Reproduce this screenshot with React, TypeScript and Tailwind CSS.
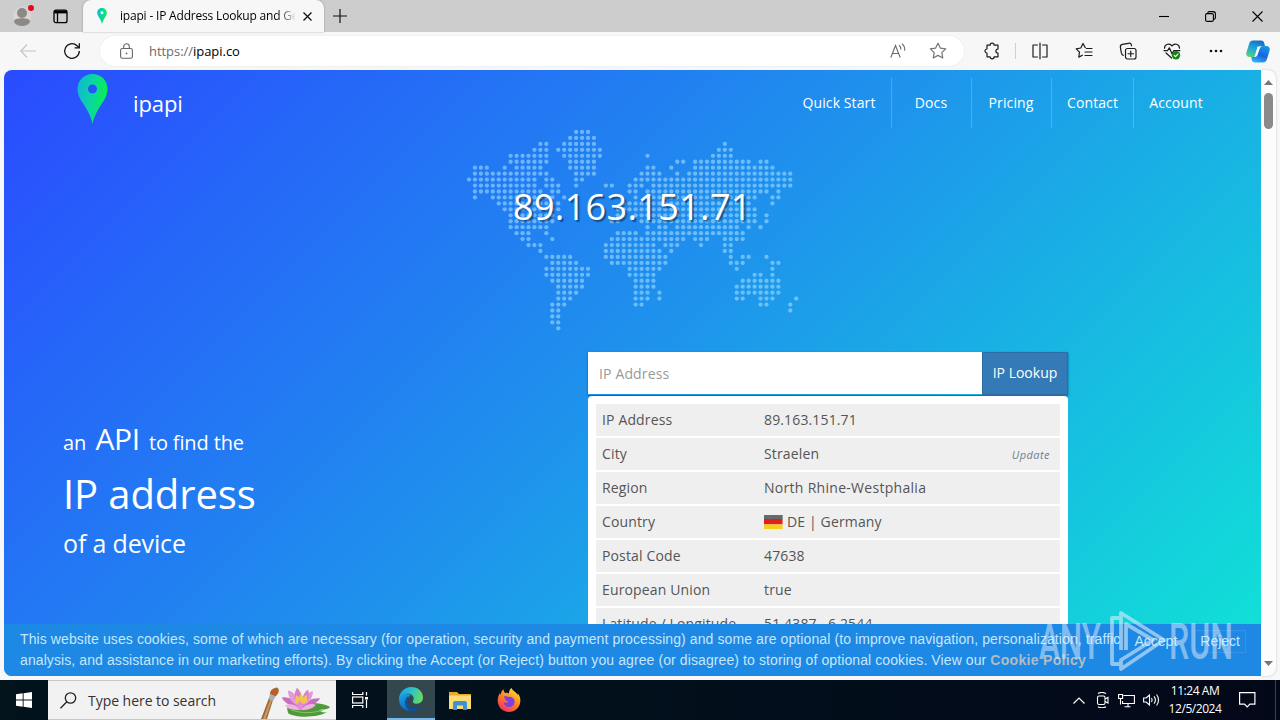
import type { ReactNode } from "react";

type Range = [number, number];

const r = (a: number, b: number = a): Range => [a, b];

/** Columns that carry a dot, one entry for each row of the world map. */
const MAP_ROWS: Range[][] = [
  [r(18, 20)],
  [r(17, 21)],
  [r(12, 13), r(16, 21), r(43)],
  [r(11, 13), r(15, 22), r(42, 44)],
  [r(7, 13), r(16, 22), r(30), r(41, 44)],
  [r(7, 13), r(17, 21), r(35, 36), r(38, 47), r(49, 50)],
  [r(1, 3), r(6), r(8, 12), r(17, 21), r(30, 31), r(34), r(38, 51)],
  [r(1, 11), r(12, 13), r(18, 21), r(29, 32), r(35), r(37, 54)],
  [r(0, 11), r(13, 14), r(18, 19), r(28, 31), r(32, 54)],
  [r(1, 11), r(13, 15), r(18), r(23, 24), r(27, 29), r(31, 54)],
  [r(1, 12), r(14, 15), r(27, 28), r(30, 50), r(52)],
  [r(1), r(4, 14), r(16), r(28), r(30, 48), r(51, 52)],
  [r(5, 15), r(26, 47), r(51)],
  [r(6, 15), r(25, 48)],
  [r(7, 14), r(25, 26), r(28, 48), r(50)],
  [r(7, 14), r(24, 25), r(29, 48), r(50)],
  [r(7, 13), r(30), r(32, 33), r(35, 45), r(47), r(49)],
  [r(8, 10), r(13), r(25, 28), r(30, 33), r(34, 46)],
  [r(9, 10), r(14), r(24, 34), r(35, 36), r(38, 40), r(43, 46)],
  [r(10, 12), r(23, 31), r(33, 35), r(39), r(43, 44)],
  [r(12), r(23, 32), r(34), r(43, 44)],
  [r(13, 17), r(23, 33), r(44), r(46, 47), r(50)],
  [r(14, 18), r(24, 33), r(44, 46), r(51, 52)],
  [r(13, 20), r(27, 32), r(45), r(51)],
  [r(13, 20), r(27, 31), r(48, 49), r(51)],
  [r(14, 19), r(28, 31), r(46, 52)],
  [r(15, 19), r(28, 31), r(45, 52)],
  [r(15, 18), r(28, 30), r(32), r(45, 52)],
  [r(15, 17), r(28, 30), r(32), r(45, 46), r(49, 51), r(55)],
  [r(14, 16), r(28, 29), r(49, 50), r(54)],
  [r(14, 15), r(54)],
  [r(14, 15)],
  [r(14, 15)],
  [r(15)],
];

function WorldMap() {
  const pitch = 5.95;
  const dots: ReactNode[] = [];
  MAP_ROWS.forEach((row, y) =>
    row.forEach(([a, b]) => {
      for (let x = a; x <= b; x++) {
        dots.push(<circle key={`${x}-${y}`} cx={3 + x * pitch} cy={4 + y * pitch} r="2.15" />);
      }
    })
  );
  return (
    <svg width="334" height="204" viewBox="0 0 334 204" fill="#9fdcff" fillOpacity="0.6">
      {dots}
    </svg>
  );
}

function Pin({ id, className }: { id: string; className: string }) {
  return (
    <svg viewBox="0 0 30 50" className={className}>
      <defs>
        <linearGradient id={id} x1="0" y1="0.2" x2="1" y2="0.4">
          <stop offset="0" stopColor="#12b5d8" />
          <stop offset="0.5" stopColor="#0ad7a0" />
          <stop offset="1" stopColor="#06f04e" />
        </linearGradient>
      </defs>
      <path
        fill={`url(#${id})`}
        fillRule="evenodd"
        d="M15 0C6.5 0 0 6.6 0 15c0 8 5 13 9 20 3 5.200 5 10 6 15 1-5 3-9.800 6-15 4-7 9-12 9-20C30 6.600 23.500 0 15 0zm0 10.500a4.500 4.500 0 1 1 0 9 4.500 4.500 0 0 1 0-9z"
      />
    </svg>
  );
}

function TitleBar() {
  return (
    <div className="flex h-8 bg-[#cdcdcd]">
      <div className="flex w-[83px] items-center pl-[13px]">
        <svg className="overflow-visible" width="22" height="20" viewBox="0 0 22 20">
          <rect x="0" y="1" width="18" height="18" rx="9" fill="#d8d5d3" />
          <circle cx="9" cy="7" r="5" fill="#8c8886" />
          <path d="M1 16c0-3 3.500-3.700 8-3.700s8 .7 8 3.700c-1.500 2.800-4.500 4-8 4s-6.500-1.200-8-4z" fill="#8c8886" />
          <circle cx="18" cy="2" r="3" fill="#e00b1c" />
        </svg>
        <svg className="ml-[18px]" width="15" height="15" viewBox="0 0 15 15" fill="none" stroke="#000" strokeWidth="1.300">
          <rect x="1" y="1.200" width="13" height="12.500" rx="2" />
          <path d="M1 3h13" strokeWidth="2.800" />
          <path d="M4.500 3v10.500" />
        </svg>
      </div>
      <div className="flex w-[241px] items-center rounded-t-lg bg-[#f7f7f7] pl-[13px] shadow-[0_0_2px_rgba(0,0,0,0.35)]">
        <Pin id="tab-pin" className="h-4 w-3" />
        <div className="ml-3 w-[175px] whitespace-nowrap bg-linear-to-r from-black from-88% to-[#e8e8e8] bg-clip-text font-['Open_Sans'] text-[12px] leading-5 tracking-[-0.19px] text-transparent">
          ipapi - IP Address Lookup and Ge
        </div>
        <svg className="ml-2" width="9" height="9" viewBox="0 0 9 9" stroke="#111" strokeWidth="1.300">
          <path d="M.5.5l8 8M8.500.5l-8 8" />
        </svg>
      </div>
      <svg className="ml-[9px] mt-[9px]" width="14" height="14" viewBox="0 0 14 14" stroke="#111" strokeWidth="1.200">
        <path d="M7 0v14M0 7h14" />
      </svg>
      <div className="ml-auto flex items-center pr-[17px]">
        <svg width="10" height="10" viewBox="0 0 10 10" stroke="#000" strokeWidth="1.100">
          <path d="M0 5.500h10" />
        </svg>
        <svg className="ml-9" width="11" height="11" viewBox="0 0 11 11" fill="none" stroke="#000" strokeWidth="1.100">
          <rect x=".6" y="2.600" width="7.800" height="7.800" rx="1.500" />
          <path d="M2.600 2.500C2.700 1.200 3.200.6 4.500.6h3.700c1.500 0 2.200.7 2.200 2.200v3.700c0 1.200-.6 1.800-1.800 1.900" />
        </svg>
        <svg className="ml-9" width="11" height="11" viewBox="0 0 11 11" stroke="#000" strokeWidth="1.100">
          <path d="M.5.5l10 10M10.500.5l-10 10" />
        </svg>
      </div>
    </div>
  );
}

function ToolIcon({ children, className }: { children: ReactNode; className: string }) {
  return (
    <svg
      className={className}
      width="18"
      height="18"
      viewBox="0 0 18 18"
      fill="none"
      stroke="#1b1b1b"
      strokeWidth="1.200"
      strokeLinecap="round"
      strokeLinejoin="round"
    >
      {children}
    </svg>
  );
}

const STAR = "M9 1.200l2.350 4.900 5.350.75-3.900 3.750.95 5.350L9 13.400l-4.750 2.550.95-5.350L1.300 6.850l5.350-.75z";

function Toolbar() {
  return (
    <div className="flex h-[38px] items-center bg-[#f7f7f7]">
      <svg className="ml-5" width="16" height="14" viewBox="0 0 16 14" fill="none" stroke="#c4c4c4" strokeWidth="1.200">
        <path d="M7 .5L.8 7 7 13.500M1 7h15" />
      </svg>
      <svg className="ml-[27px]" width="18" height="18" viewBox="0 0 18 18" fill="none" stroke="#111" strokeWidth="1.300">
        <path d="M16.300 9A7.300 7.300 0 1 1 14 3.700l2 1.900" />
        <path d="M16.300 1.200v4.700h-4.700" />
      </svg>
      <div className="ml-[19px] flex h-[30px] w-[864px] items-center rounded-full bg-white pl-5 shadow-[0_0_1px_1px_#f0f0f0]">
        <svg width="13" height="16" viewBox="0 0 13 16" fill="none" stroke="#666" strokeWidth="1.100">
          <rect x=".6" y="5.500" width="11.800" height="9.800" rx="1.800" />
          <path d="M3.700 5.500V3.600a2.800 2.800 0 0 1 5.600 0v1.900" />
          <circle cx="6.500" cy="10.400" r=".9" fill="#666" stroke="none" />
        </svg>
        <div className="ml-4 font-['Open_Sans'] text-[13px] leading-5 tracking-[-0.04px] text-black">
          <span className="text-[#6b6b6b]">https://</span>ipapi.co
        </div>
        <svg className="ml-auto" width="17" height="16" viewBox="0 0 17 16" fill="none" stroke="#6a6a6a" strokeWidth="1.100">
          <path d="M.8 14.500L5.500 2.500l4.700 12M2.400 10.500h6.200" />
          <path d="M9 2.300c1.300 1 1.900 2.400 1.800 4.200M12 .7c2 1.600 3 4 2.700 7" />
        </svg>
        <ToolIcon className="ml-[22px] mr-[17px] opacity-60">
          <path d={STAR} />
        </ToolIcon>
      </div>
      <ToolIcon className="ml-[19px]">
        <path d="M4 3.200h3.100a2 2 0 0 1 4 0H15V7a2 2 0 0 0 0 4.200v3.600h-3.900a2 2 0 0 1-4 0H4V11a2 2 0 1 1 0-4z" />
      </ToolIcon>
      <div className="ml-[14px] h-4 w-px bg-[#cfcfcf]" />
      <ToolIcon className="ml-[15px]">
        <path d="M6.500 3H2v12h4.500M11.500 3H16v12h-4.500M9 1.200v15.600" />
      </ToolIcon>
      <ToolIcon className="ml-[26px]">
        <path d="M10.300 5.700L8 1.500 5.800 6l-4.600.8 3.300 3.400-.7 4.900 3.600-1.900M11.500 6.500H17M10 10h7M10 13.500h7" />
      </ToolIcon>
      <ToolIcon className="ml-[26px]">
        <rect x="6.500" y="6.500" width="10.500" height="10.500" rx="2" />
        <path d="M11.750 9v5.500M9 11.750h5.500M4.300 13.500C3 13 2.600 12 2.300 10.700L1.400 5.300C1.100 3.700 1.900 2.700 3.400 2.400L9.500 1.300c1.600-.3 2.600.3 3 1.800v.6" />
      </ToolIcon>
      <ToolIcon className="ml-[26px]">
        <path d="M1.500 6.200C1.500 2 6.800.6 9 4c2.200-3.400 7.500-2 7.500 2.200M1 8.700h3.500l1.800-2.900 2.700 6 1.700-3.100h6.200M3 11l5.600 5" />
        <circle cx="13" cy="13.200" r="4.200" fill="#17841b" stroke="none" />
        <path d="M11.200 13.300l1.300 1.300 2.400-2.500" stroke="#fff" />
      </ToolIcon>
      <svg className="ml-7" width="14" height="4" viewBox="0 0 14 4" fill="#111">
        <circle cx="2" cy="2" r="1.300" />
        <circle cx="7" cy="2" r="1.300" />
        <circle cx="12" cy="2" r="1.300" />
      </svg>
      <svg className="ml-[23px]" width="24" height="23" viewBox="0 0 24 23">
        <defs>
          <linearGradient id="cop-a" x1="0.6" y1="0" x2="0.2" y2="1">
            <stop offset="0" stopColor="#1670c8" />
            <stop offset="0.5" stopColor="#20a8d8" />
            <stop offset="1" stopColor="#5fd07b" />
          </linearGradient>
          <linearGradient id="cop-b" x1="0.7" y1="0" x2="0.3" y2="1">
            <stop offset="0" stopColor="#1598e8" />
            <stop offset="0.55" stopColor="#1a63e0" />
            <stop offset="1" stopColor="#2cb5f2" />
          </linearGradient>
        </defs>
        <path d="M7 .5h8c2 0 2.800 1 3.200 2.500L19 6h-3.500c-2 0-2.800 1-3.300 2.800L10.500 14c-.6 2-1.500 3-3.300 3H3.500C1 17-.2 15 .4 12.500L3.200 3.500C3.800 1.500 5 .5 7 .5z" fill="url(#cop-a)" />
        <path d="M17 22.500H9c-2 0-2.800-1-3.200-2.500L5.300 17h3c2 0 2.800-1 3.300-2.800L13.500 9c.6-2 1.500-3 3.300-3h3.700c2.500 0 3.700 2 3.100 4.500l-2.800 9c-.6 2-1.800 3-3.800 3z" fill="url(#cop-b)" />
        <path d="M11.500 6.500h3.800c-1 .5-1.500 1.200-1.900 2.500l-1.800 5.200c-.5 1.500-1.200 2.300-2.300 2.300H8c.7-.5 1-1.200 1.300-2.200z" fill="#eefaff" />
      </svg>
    </div>
  );
}

function Header() {
  return (
    <div className="flex h-[58px] pl-[73px] pt-1 font-['Open_Sans'] text-white">
      <Pin id="logo-pin" className="h-[50px] w-[31px]" />
      <div className="ml-[25px] mt-[13px] text-[22px] leading-8 tracking-[-0.1px]">ipapi</div>
      <nav className="ml-auto mr-[43px] mt-1 flex h-[50px] text-center text-[14px] leading-[50px] tracking-[0.1px]">
        <div className="w-[105px] border-r border-white/20">Quick Start</div>
        <div className="w-20 border-r border-white/20 pr-px">Docs</div>
        <div className="w-20 border-r border-white/20 pr-px">Pricing</div>
        <div className="w-[82px] border-r border-white/20">Contact</div>
        <div className="w-[84px]">Account</div>
      </nav>
    </div>
  );
}

function Flag() {
  return (
    <svg className="mr-1" width="19" height="14" viewBox="0 0 19 14">
      <rect width="18.500" height="5" fill="#555" />
      <rect y="4.700" width="18.500" height="4.700" fill="#e0201c" />
      <rect y="9.400" width="18.500" height="4.600" fill="#f6cf17" />
      <path d="M0 0h18.500v4.500C13 2 6 6 0 3.500z" fill="#777" fillOpacity=".6" />
    </svg>
  );
}

function Row({ label, children, action }: { label: string; children: ReactNode; action?: string }) {
  return (
    <div className="flex h-8 items-center bg-[#efefef] pl-1.5">
      <div className="w-[162px]">{label}</div>
      <div className="flex items-center">{children}</div>
      {action && (
        <div className="ml-auto pr-[10px] pt-px text-[11px] italic tracking-[0.45px] text-[#708090]">{action}</div>
      )}
    </div>
  );
}

function Lookup() {
  return (
    <div className="w-[480px] font-['Open_Sans'] text-[14px] leading-5 tracking-[0.14px]">
      <div className="flex h-[43px] shadow-[0_1px_2px_rgba(20,60,120,0.8)]">
        <div className="h-[42px] flex-1 bg-white pl-[11px] pt-3 text-[#999]">IP Address</div>
        <div className="w-[86px] border border-[#2e6da4] bg-[#337ab7] pt-[10px] text-center tracking-normal text-white">
          IP Lookup
        </div>
      </div>
      <div className="mt-px flex h-[300px] flex-col gap-0.5 rounded-t bg-white p-2 text-[#555]">
        <Row label="IP Address">89.163.151.71</Row>
        <Row label="City" action="Update">
          Straelen
        </Row>
        <Row label="Region">
          <span className="tracking-[0.29px]">North Rhine-Westphalia</span>
        </Row>
        <Row label="Country">
          <Flag />
          DE | Germany
        </Row>
        <Row label="Postal Code">47638</Row>
        <Row label="European Union">true</Row>
        <Row label="Latitude / Longitude">51.4387 , 6.2544</Row>
      </div>
    </div>
  );
}

function Hero() {
  return (
    <div className="flex pl-[59px]">
      <div className="w-[525px] pt-[65px] font-['Open_Sans'] font-normal text-white">
        <div className="flex items-baseline leading-[44px]">
          <span className="text-[20px]">an</span>
          <span className="ml-[9px] text-[30px] tracking-[-0.3px]">API</span>
          <span className="ml-[9px] text-[20px] tracking-[-0.13px]">to find the</span>
        </div>
        <div className="mt-px text-[40px] leading-[56px] tracking-[-0.1px]">IP address</div>
        <div className="mt-px text-[25px] leading-10 tracking-[-0.15px]">of a device</div>
      </div>
      <Lookup />
    </div>
  );
}

function CookieBar() {
  return (
    <div className="absolute inset-x-0 bottom-0 flex h-[52px] bg-[#1e88e5] pl-4 pt-[5px] font-['Liberation_Sans'] text-[14px] leading-[21px] tracking-[0.096px] text-[#c5e7fb]">
      <div className="whitespace-nowrap">
        <div>
          This website uses cookies, some of which are necessary (for operation, security and payment processing) and some
          are optional (to improve navigation, personalization, traffic
        </div>
        <div>
          analysis, and assistance in our marketing efforts). By clicking the Accept (or Reject) button you agree (or
          disagree) to storing of optional cookies. View our{" "}
          <span className="font-bold tracking-[0.3px] text-[#b3bcc4]">Cookie Policy</span>
        </div>
      </div>
      <div className="ml-auto mr-[15px] flex gap-[17px] pt-px tracking-normal">
        <div className="leading-[22px]">Accept</div>
        <div className="h-[23px] border border-white/10 px-[5px] leading-5">Reject</div>
      </div>
    </div>
  );
}

function Watermark() {
  return (
    <div className="pointer-events-none absolute left-[1036px] top-[608px]">
      <svg width="200" height="68" viewBox="0 0 200 68" fill="#e2f1fb" fillOpacity="0.5">
        <text x="3" y="51" fontFamily="Roboto, sans-serif" fontSize="50" fontWeight="500" textLength="62" lengthAdjust="spacingAndGlyphs">
          ANY
        </text>
        <text x="133" y="51" fontFamily="Roboto, sans-serif" fontSize="50" fontWeight="500" textLength="64" lengthAdjust="spacingAndGlyphs">
          RUN
        </text>
        <path
          d="M84 10h-8v46h8M85 42V5l43 27L85 61v-9l32-20-27-16v26"
          fill="none"
          stroke="#d9edfa"
          strokeOpacity="0.6"
          strokeWidth="3.800"
          strokeLinejoin="round"
        />
      </svg>
    </div>
  );
}

function PageView() {
  return (
    <div className="flex h-[610px] bg-[#f7f7f7] pl-1">
      <div className="relative h-[606px] w-[1257px] overflow-hidden rounded-l-lg bg-[linear-gradient(135deg,#2a4bff_0%,#1e94ec_50%,#10e4d6_100%)]">
        <Header />
        <div className="relative ml-[462px] h-[224px] w-[334px]">
          <WorldMap />
          <div className="absolute left-[47px] top-[55px] whitespace-nowrap font-['Open_Sans'] text-[36px] leading-[48px] tracking-[0.35px] text-white [text-shadow:2px_2px_1px_rgba(0,0,0,0.4)]">
            89.163.151.71
          </div>
        </div>
        <Hero />
        <CookieBar />
      </div>
      <div className="flex h-[606px] w-[15px] flex-col items-center rounded-r-lg bg-[#fcfcfc] pt-[10px] shadow-[0_0_2px_rgba(0,0,0,0.25)]">
        <svg width="9" height="5" viewBox="0 0 9 5" fill="#777">
          <path d="M0 5L4.500 0 9 5z" />
        </svg>
        <div className="mt-2 h-9 w-[9px] rounded-full bg-[#8a8a8a]" />
        <svg className="mb-[10px] mt-auto" width="9" height="5" viewBox="0 0 9 5" fill="#777">
          <path d="M0 0l4.500 5L9 0z" />
        </svg>
      </div>
    </div>
  );
}

function Lotus() {
  return (
    <svg width="74" height="38" viewBox="0 0 74 38">
      <path d="M2 38L10 17l4 2-6 19z" fill="#9a6a3c" />
      <path d="M4 38L11.500 18l1.500 1L6.500 38z" fill="#c79a66" />
      <path d="M9.500 18l1.500-5 5.500 2.500L14 20z" fill="#a9b0b5" />
      <path d="M11 13c0-4 3-6 7-6.500 3 1.500 2 6-1.500 9z" fill="#b5612d" />
      <path d="M28 27c8-6 34-7 43-1-2 3-7 2-11 3 2 2 5 3 8 2-7 5-31 7-39 1z" fill="#4f9a3c" />
      <path d="M33 29c10 4 22 3 31 0" stroke="#8cc45a" fill="none" />
      <g transform="translate(0 5) scale(1 .88)">
        <path d="M41 24C32 24 24 18 23 13c7-1 14 3 18 11zM42 24c9 0 17-5 19-10-7-1-14 3-19 10z" fill="#c86fc0" />
        <path d="M41 24C33 20 29 13 29 5c6 1 11 9 12 19zM42 24c7-3 12-10 12-18-6 1-12 9-12 18z" fill="#e39ad8" />
        <path d="M41 24c-6-6-7-15-3-22 5 5 7 14 3 22zM43 24c-1-8 1-16 6-20 2 7 0 15-6 20z" fill="#d980cc" />
        <path d="M36 19l1-9 3 3 2-5 2 5 4-3 0 8c-3 4-9 4-12 1z" fill="#f2c64d" />
        <path d="M41 27c-7 1-13-1-15-5 6-3 12 0 15 5zM42 27c7 1 13-2 15-6-6-2-12 1-15 6z" fill="#f0b0e5" />
        <path d="M41 28c-4-4-4-8 0-11 4 3 5 7 0 11z" fill="#e68ad7" />
      </g>
    </svg>
  );
}

function EdgeLogo() {
  return (
    <svg width="24" height="24" viewBox="0 0 24 24">
      <defs>
        <linearGradient id="edge-a" x1="0" y1="0.3" x2="1" y2="0.5">
          <stop offset="0" stopColor="#19a3df" />
          <stop offset="0.5" stopColor="#29c3c9" />
          <stop offset="1" stopColor="#69dc5b" />
        </linearGradient>
        <linearGradient id="edge-b" x1="0" y1="0" x2="0.7" y2="1">
          <stop offset="0" stopColor="#1ea4e8" />
          <stop offset="1" stopColor="#0b5fb8" />
        </linearGradient>
      </defs>
      <path d="M0 12a12 12 0 0 0 20 8.900c-6 2.600-12-1-12-6.400C8 11 10 9 12 8.500 7 4.500 0 7 0 12z" fill="url(#edge-b)" />
      <path d="M8.500 13c-1.500 6 4 11 12.500 7.200C19 22.700 16 24 12.500 24 5 23 4 12 9.500 9.300z" fill="#0c4f9f" />
      <path d="M0 12C.3 5 5.500 0 12 0c7.500 0 12 5 12 10.500 0 4-3 6.200-6 6.200-3.700 0-4.600-1.500-4-2.700 2-3.500-.5-7.500-5.500-7.500C4 6.500.5 9 0 12z" fill="url(#edge-a)" />
    </svg>
  );
}

function Taskbar() {
  return (
    <div className="flex h-10 bg-linear-to-r from-[#02131c] via-[#02101c] to-[#030818] text-white">
      <div className="flex w-12 items-center justify-center">
        <svg width="16" height="16" viewBox="0 0 16 16" fill="#fff">
          <path d="M0 2.300L6.700 1.300v6.200H0zM7.600 1.200L16 0v7.500H7.600zM0 8.400h6.700v6.300L0 13.700zM7.600 8.400H16V16l-8.400-1.200z" />
        </svg>
      </div>
      <div className="flex w-[288px] items-center border-y border-[#c6c6c6] bg-[#f2f2f2] pl-3">
        <svg width="17" height="17" viewBox="0 0 17 17" fill="none" stroke="#222" strokeWidth="1.300">
          <circle cx="10.500" cy="6" r="5.200" />
          <path d="M6.800 9.800L.5 16.300" />
        </svg>
        <div className="ml-[11px] pt-0.5 font-['Open_Sans'] text-[14px] leading-5 tracking-[-0.04px] text-[#333]">
          Type here to search
        </div>
        <div className="ml-auto mr-[3px]">
          <Lotus />
        </div>
      </div>
      <div className="flex w-[51px] items-center justify-center pr-[3px]">
        <svg width="16" height="16" viewBox="0 0 16 16" fill="none" stroke="#fff" strokeWidth="1.200">
          <path d="M.6 0v2.500h10.200V0M.6 16v-2.500h10.200V16" />
          <rect x=".6" y="5" width="10.200" height="6" />
          <path d="M14.500 0v3.500M14.500 8v8" />
          <path d="M13 5h3v2.500h-3z" fill="#fff" stroke="none" />
        </svg>
      </div>
      <div className="flex w-12 items-center justify-center border-b-2 border-[#76b9ed] bg-[#33474f]">
        <EdgeLogo />
      </div>
      <div className="flex w-[50px] items-center justify-center">
        <svg width="22" height="19" viewBox="0 0 22 19">
          <path d="M0 1h8l2 2h12v15H0z" fill="#e9a827" />
          <path d="M0 4.500h22V18H0z" fill="#fbdc74" />
          <path d="M4 19v-7.500L5.500 10h11l1.500 1.500V19h-4v-4.500H8V19z" fill="#3e92cf" />
        </svg>
      </div>
      <div className="flex w-12 items-center justify-center">
        <svg width="24" height="24" viewBox="0 0 24 24">
          <defs>
            <linearGradient id="fox" x1="0.8" y1="0" x2="0.2" y2="1">
              <stop offset="0" stopColor="#ffe23b" />
              <stop offset="0.45" stopColor="#ff8a22" />
              <stop offset="1" stopColor="#f52763" />
            </linearGradient>
          </defs>
          <path d="M14.500 0c1 3 5 4 6.300 7.200.3-.8 0-1.700-.2-2.200 2 2.500 3 5 2.700 8.500C22.800 19.500 18 24 12 24 5.500 24 .7 19 .7 12.800.7 9.500 1.700 7 3 5c0 .8.1 1.400.4 2C4 4.500 5 2.500 6.500 1.300c0 1.700.7 3.200 2 3.700 1.500-.4 2.500 0 3.500.7C11.800 3 13 1 14.500 0z" fill="url(#fox)" />
          <path d="M7 8.500c2.500-.8 4 1 6.500.3 3 .7 4.500 3 4 5.700-.5 3-3 4.800-5.800 4.500-3-.2-5-2.300-5-5 2 1.500 4 .8 5-.8-2 .2-3-.7-3.500-2-.5-.7-1-1.500-1.200-2.700z" fill="#7a42d8" />
        </svg>
      </div>
      <div className="ml-auto flex items-center">
        <svg width="12" height="7" viewBox="0 0 12 7" fill="none" stroke="#fff" strokeWidth="1.200">
          <path d="M.5 6.500L6 1l5.500 5.500" />
        </svg>
        <svg className="ml-[11px]" width="13" height="16" viewBox="0 0 13 16" fill="none" stroke="#fff" strokeWidth="1.100">
          <rect x="1.500" y="4" width="7.500" height="8.500" rx="1.500" />
          <path d="M9 7l3-1.500V11L9 9.500M2 1.500C4 .2 7.500.2 10 1.500M2 14.700c2 1.200 5.500 1.200 8 0" />
        </svg>
        <svg className="ml-[9px]" width="17" height="15" viewBox="0 0 17 15" fill="none" stroke="#fff" strokeWidth="1.100">
          <path d="M5.500 2.500h10.900v8H4.500V8M10 10.500v3M6.500 13.800h6M.6 1.500h4v4h-4zM2.500 5.500v6" />
        </svg>
        <svg className="ml-2" width="17" height="14" viewBox="0 0 17 14" fill="none" stroke="#fff" strokeWidth="1.100">
          <path d="M.6 5v4h2.500L6.500 12V2L3.100 5zM8.500 5c.8 1.200.8 2.800 0 4M11 3.300c1.700 2.200 1.700 5.200 0 7.400M13.500 1.500c2.700 3.200 2.700 7.800 0 11" />
        </svg>
        <div className="ml-[7px] w-[56px] whitespace-nowrap text-center font-['Open_Sans'] text-[12px] leading-[18px] tracking-[-0.45px]">
          <div>11:24 AM</div>
          <div>12/5/2024</div>
        </div>
        <svg className="ml-4" width="17" height="16" viewBox="0 0 17 16" fill="none" stroke="#fff" strokeWidth="1.200">
          <path d="M.6.6h15.300v11.600h-5L8.200 15l-2.700-2.800H.6z" />
        </svg>
        <div className="ml-[19px] mr-1 h-10 w-px bg-[#3b414b]" />
      </div>
    </div>
  );
}

export default function App() {
  return (
    <div className="relative h-[720px] w-[1280px] overflow-hidden bg-white">
      <TitleBar />
      <Toolbar />
      <PageView />
      <Taskbar />
      <Watermark />
    </div>
  );
}
